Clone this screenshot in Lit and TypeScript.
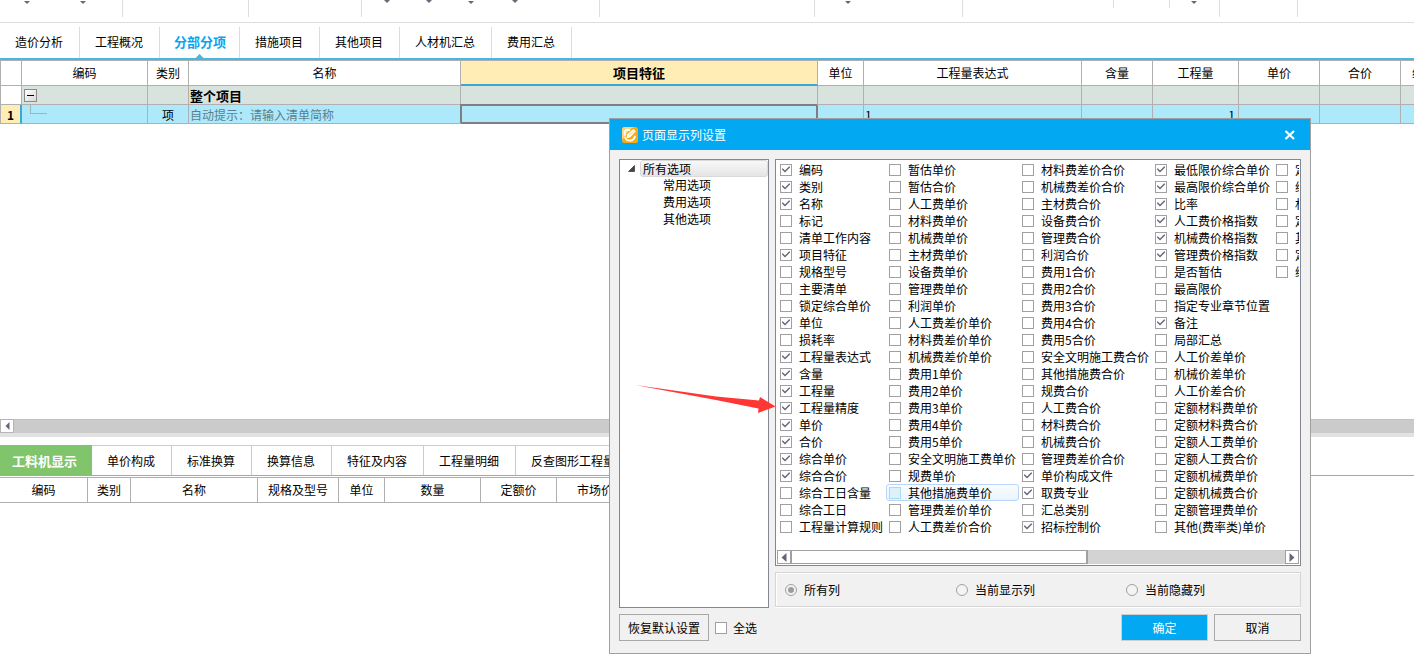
import { LitElement, html, css, svg, nothing } from "lit";
import { customElement, state } from "lit/decorators.js";
import { classMap } from "lit/directives/class-map.js";
import { styleMap } from "lit/directives/style-map.js";

const base = css`
  * { box-sizing: border-box; }
  button {
    font: inherit;
    color: inherit;
    margin: 0;
    padding: 0;
    border: 0;
    background: none;
    white-space: nowrap;
  }
  input[type="checkbox"], input[type="radio"] {
    appearance: none;
    flex: none;
    width: 12px;
    height: 12px;
    margin: 0;
    border: 1px solid #a0a0a0;
    background: #fff;
    position: relative;
  }
  input[type="radio"] { border-radius: 50%; background: #f4f4f4; }
  input[type="checkbox"]:checked::after {
    content: "";
    position: absolute;
    inset: 0;
    background: #66667a;
    clip-path: polygon(1px 4px, 2px 4px, 4px 6px, 8px 2px, 9px 2px, 9px 3px, 4px 8px, 1px 5px);
  }
  input[type="radio"]:checked::after {
    content: "";
    position: absolute;
    inset: 2px;
    border-radius: 50%;
    background: #9c9c9c;
  }
`;

type Cell = { w: number; caret?: "high" | "low"; sep?: "full" | "half" };
const ribbon: Cell[] = [
  { w: 54, caret: "low" }, { w: 58, caret: "low" }, { w: 11, sep: "full" },
  { w: 126, sep: "full" }, { w: 113, sep: "full" },
  { w: 50, caret: "high" }, { w: 34, caret: "high" }, { w: 50, caret: "low" },
  { w: 38, caret: "high" }, { w: 66, sep: "full" }, { w: 215, sep: "full" },
  { w: 66, caret: "low" }, { w: 82, sep: "full" }, { w: 151, sep: "half" },
  { w: 56, sep: "half" }, { w: 48, caret: "low" }, { w: 2, sep: "full" }, { w: 78, sep: "full" },
];

const upperTabs = ["造价分析", "工程概况", "分部分项", "措施项目", "其他项目", "人材机汇总", "费用汇总"];
const lowerTabs = ["工料机显示", "单价构成", "标准换算", "换算信息", "特征及内容", "工程量明细", "反查图形工程量"];

const upperCols: [string, number][] = [
  ["", 22], ["编码", 126], ["类别", 41], ["名称", 272], ["项目特征", 357], ["单位", 46],
  ["工程量表达式", 218], ["含量", 71], ["工程量", 86], ["单价", 81], ["合价", 81], ["综合单价", 71],
];
const lowerCols: [string, number][] = [
  ["编码", 88], ["类别", 43], ["名称", 127], ["规格及型号", 81], ["单位", 46],
  ["数量", 96], ["定额价", 76], ["市场价", 77], ["合价", 76],
];

// Entries that start with "+" are ticked.
const options: string[][] = [
  ["+编码", "+类别", "+名称", "标记", "清单工作内容", "+项目特征", "规格型号", "主要清单", "锁定综合单价", "+单位", "损耗率", "+工程量表达式", "+含量", "+工程量", "+工程量精度", "+单价", "+合价", "+综合单价", "+综合合价", "综合工日含量", "综合工日", "工程量计算规则"],
  ["暂估单价", "暂估合价", "人工费单价", "材料费单价", "机械费单价", "主材费单价", "设备费单价", "管理费单价", "利润单价", "人工费差价单价", "材料费差价单价", "机械费差价单价", "费用1单价", "费用2单价", "费用3单价", "费用4单价", "费用5单价", "安全文明施工费单价", "规费单价", "其他措施费单价", "管理费差价单价", "人工费差价合价"],
  ["材料费差价合价", "机械费差价合价", "主材费合价", "设备费合价", "管理费合价", "利润合价", "费用1合价", "费用2合价", "费用3合价", "费用4合价", "费用5合价", "安全文明施工费合价", "其他措施费合价", "规费合价", "人工费合价", "材料费合价", "机械费合价", "管理费差价合价", "+单价构成文件", "+取费专业", "汇总类别", "+招标控制价"],
  ["+最低限价综合单价", "+最高限价综合单价", "+比率", "+人工费价格指数", "+机械费价格指数", "+管理费价格指数", "是否暂估", "最高限价", "指定专业章节位置", "+备注", "局部汇总", "人工价差单价", "机械价差单价", "人工价差合价", "定额材料费单价", "定额材料费合价", "定额人工费单价", "定额人工费合价", "定额机械费单价", "定额机械费合价", "定额管理费单价", "其他(费率类)单价"],
  ["定额", "综合", "材料", "定额", "其他", "定额", "综合"],
];

@customElement("column-dialog")
export class ColumnDialog extends LitElement {
  @state() private hot = "其他措施费单价";

  static styles = [base, css`
    :host {
      display: block;
      border: 1px solid #a0a0a0;
      background: #f1f1f1;
      font-size: 12px;
      line-height: 17px;
      color: #000;
    }
    .title {
      display: flex;
      align-items: center;
      height: 31px;
      padding: 0 14px 0 12px;
      background: #02a9f2;
      color: #fff;
      gap: 4px;
    }
    .title h2 { font: inherit; margin: 0; flex: 1; }
    .title svg { display: block; }
    .body { padding: 9px 9px 12px; }
    .main { display: grid; grid-template-columns: 150px minmax(0, 1fr); gap: 6px; height: 449px; }
    .tree, .list { background: #fff; border: 1px solid #828790; }
    .tree ul { list-style: none; margin: 0; padding: 0; }
    .root { display: flex; align-items: center; padding-left: 8px; }
    .root svg { margin-right: 5px; flex: none; }
    .root button {
      flex: 1;
      height: 17px;
      line-height: 15px;
      padding-left: 2px;
      text-align: left;
      border: 1px solid #d9d9d9;
      border-radius: 3px;
      background: linear-gradient(#f8f8f8, #e5e5e5);
    }
    .leaf button { display: block; height: 17px; line-height: 15px; padding-bottom: 2px; margin-left: 43px; }
    .right { display: flex; flex-direction: column; gap: 6px; min-width: 0; }
    .list { flex: 1; padding: 1px; display: flex; flex-direction: column; min-height: 0; }
    .cols { flex: 1; display: grid; grid-template-columns: 109px 133px 133px 121px 133px; overflow: hidden; }
    .col { display: flex; flex-direction: column; }
    .opt {
      display: flex;
      align-items: center;
      gap: 7px;
      height: 17px;
      padding-left: 3px;
      white-space: nowrap;
    }
    .hot { padding-left: 2px; border: 1px solid #b8d6fb; border-radius: 3px; background: linear-gradient(#fafcff, #ebf4fe); }
    .hot input { background: #dff1f8; border-color: #a9dcee; }
    .bar { display: flex; height: 14px; background: #d3d3d3; }
    .bar button { width: 14px; border: 1px solid #a0a0a0; background: #fff; display: grid; place-items: center; }
    .thumb { width: 297px; border: 1px solid #a0a0a0; border-right-width: 2px; background: #fff; }
    .space { flex: 1; }
    .scope {
      display: grid;
      grid-template-columns: 171px 170px auto;
      align-items: center;
      height: 35px;
      margin: 0 0 1px;
      padding: 0 9px;
      border: 1px solid #d5d5d5;
      box-shadow: inset 1px 1px #fff, 0 1px #fff;
    }
    .scope label { display: flex; align-items: center; gap: 7px; }
    .foot { display: flex; align-items: center; gap: 6px; margin-top: 6px; }
    .foot label { display: flex; align-items: center; gap: 6px; flex: 1; }
    .btn { height: 27px; width: 87px; border: 1px solid #a8a8a8; }
    .wide { width: 90px; }
    .ok { background: #02a9f2; color: #fff; border-color: #cfcfcf; }
    .mark { position: absolute; left: 24px; top: 266px; pointer-events: none; }
  `];

  private row(entry: string) {
    const on = entry.startsWith("+");
    const name = on ? entry.slice(1) : entry;
    return html`<label class=${classMap({ opt: true, hot: name === this.hot })}><input type="checkbox" ?checked=${on}>${name}</label>`;
  }

  render() {
    return html`
      <div class="title">
        <svg width="16" height="16" viewBox="0 0 16 16" aria-hidden="true">
          <rect width="16" height="16" rx="2.500" fill="#fbab12"/>
          <path d="M0 3Q0 0 3 0h9L7 3 2 11 0 12z" fill="#fdd27c"/>
          <path d="M7.500 3H4.500Q1.500 4.500 3 8M3 10.500Q4.500 14 8.500 13.500 12 13 13 9.500" fill="none" stroke="#fff" stroke-width="1.800" stroke-linecap="round"/>
          <path d="M5 7.500 11.500 2l2.300 2.300-5.600 6-3.700 1z" fill="#fff"/>
          <path d="M6.500 8.800 12 3.800" stroke="#fbc04a" stroke-width=".7"/>
        </svg>
        <h2>页面显示列设置</h2>
        <button aria-label="关闭">
          <svg width="12" height="10" viewBox="0 0 12 10"><path d="M1.500 1 10 9M10 1 1.500 9" stroke="#fff" stroke-width="2.200"/></svg>
        </button>
      </div>
      <div class="body">
        <div class="main">
          <nav class="tree">
            <div class="root">
              <svg width="7" height="7" viewBox="0 0 7 7"><path d="M6.500.5v6h-6z" fill="#444" stroke="#222" stroke-width=".6"/></svg>
              <button>所有选项</button>
            </div>
            <ul>${["常用选项", "费用选项", "其他选项"].map((t) => html`<li class="leaf"><button>${t}</button></li>`)}</ul>
          </nav>
          <div class="right">
            <div class="list">
              <div class="cols">${options.map((c) => html`<div class="col">${c.map((o) => this.row(o))}</div>`)}</div>
              <div class="bar">
                <button aria-label="向左"><svg width="6" height="9"><path d="M5.500 0v9L.5 4.500z" fill="#66667a"/></svg></button>
                <div class="thumb"></div>
                <div class="space"></div>
                <button aria-label="向右"><svg width="6" height="9"><path d="M.5 0v9l5-4.500z" fill="#66667a"/></svg></button>
              </div>
            </div>
            <div class="scope" role="radiogroup">
              ${["所有列", "当前显示列", "当前隐藏列"].map((t, i) => html`<label><input type="radio" name="scope" ?checked=${i === 0}>${t}</label>`)}
            </div>
          </div>
        </div>
        <div class="foot">
          <button class="btn wide">恢复默认设置</button>
          <label><input type="checkbox">全选</label>
          <button class="btn ok">确定</button>
          <button class="btn">取消</button>
        </div>
      </div>
      <svg class="mark" width="144" height="32" viewBox="0 0 144 32" aria-hidden="true">
        <path d="M1 0 82 11.500 125 15.500 126 12 141.500 21.500 124 28 124.500 23.500 82 15z" fill="#ff3634"/>
      </svg>`;
  }
}

@customElement("app-root")
export class AppRoot extends LitElement {
  @state() private tab = "分部分项";
  @state() private detail = "工料机显示";

  static styles = [base, css`
    :host {
      display: block;
      position: relative;
      height: 100vh;
      overflow: hidden;
      background: #fff;
      color: #000;
      font: 12px/17px "Noto Sans CJK SC", "Noto Sans", sans-serif;
    }
    .page { display: flex; flex-direction: column; height: 100%; }
    .ribbon { display: flex; flex: none; height: 23px; border-bottom: 1px solid #dedede; }
    .cell { display: flex; flex: none; justify-content: center; align-items: flex-start; }
    .cell svg { display: block; }
    .low { padding-top: 1px; }
    .full { height: 17px; border-right: 1px solid #dedede; }
    .half { height: 8px; border-right: 1px solid #dedede; }
    .tabs { display: flex; flex: none; height: 37px; padding-top: 4px; border-bottom: 2px solid #47b7e2; }
    .tabs button { padding: 0 16px 2px 15px; border-right: 1px solid #dcdcdc; position: relative; }
    .tabs .on { padding: 0 13px 2px 14px; font-size: 13px; font-weight: 700; color: #08a5ee; }
    .tabs .on::after {
      content: "";
      position: absolute;
      left: calc(50% - 4px);
      bottom: 0;
      width: 8px;
      height: 4px;
      background: #47b7e2;
      clip-path: polygon(50% 0, 100% 100%, 0 100%);
    }
    .upper { flex: 359 1 0; min-height: 0; overflow: hidden; }
    .lower { flex: 225 1 0; min-height: 0; overflow: hidden; padding-top: 8px; }
    table { table-layout: fixed; width: 0; border-collapse: separate; border-spacing: 0; border-top: 1px solid #b0b0b0; }
    th { height: 25px; padding: 0 0 2px; font-weight: 400; border: solid #b0b0b0; border-width: 0 1px 1px 0; white-space: nowrap; }
    td { height: 19px; padding: 0 2px; line-height: 17px; border: solid #b0b0b0; border-width: 0 1px 1px 0; white-space: nowrap; }
    .upper th:first-child, .upper td:first-child { border-left: 1px solid #b0b0b0; }
    .upper .picked { padding-bottom: 1px; background: #ffedb5; font-size: 13px; font-weight: 700; border-bottom: 2px solid #3aa8d2; }
    .group td { background: #d9e3dd; font-size: 13px; font-weight: 700; padding: 0 1px; }
    .group td:first-child { background: #fff; }
    .line td { background: #ade9fb; padding: 0 1px; }
    .upper .line td:first-child { background: #ffedb5; font-weight: 700; text-align: center; border-right: 2px solid #3aa8d2; }
    .fold { display: block; position: relative; width: 13px; height: 13px; margin-left: 1px; border: 1px solid #8a8a8a; background: linear-gradient(135deg, #fff, #d8d8d8); }
    .fold::after { content: ""; position: absolute; left: 2px; right: 2px; top: 5px; height: 1px; background: #000; }
    .branch { display: block; width: 17px; height: 9px; margin: 0 0 9px 7px; border: solid #9bb5bd; border-width: 0 0 1px 1px; }
    .hint { color: #5b7f8c; }
    .mid { text-align: center; }
    .line .num { text-align: right; padding-right: 3px; }
    .line .cursor { border-color: #7f7f7f; box-shadow: inset 0 0 0 1px #7f7f7f, -1px -1px #7f7f7f; }
    .scroll { display: flex; flex: none; height: 18px; background: #cbcbcb; border-bottom: 4px solid #e2e2e2; box-shadow: inset 0 1px #c3c3c3; }
    .scroll button { width: 14px; border: 1px solid #b5b5b5; background: #fff; display: grid; place-items: center; }
    .subtabs { display: flex; height: 31px; border-bottom: 1px solid #80c56c; margin-bottom: 1px; }
    .subtabs button { padding: 0 16px 0 15px; border-top: 1px solid #b5e19b; border-right: 1px solid #b5e19b; }
    .subtabs .on { padding: 0 14px 0 12px; font-size: 13px; font-weight: 700; color: #fff; background: #80c56c; border-color: #80c56c; }
    column-dialog { position: absolute; left: 609px; right: 103px; top: 118px; }
  `];

  private cols(c: [string, number][]) {
    return html`<colgroup>${c.map(([, w]) => html`<col style=${styleMap({ width: w + "px" })}>`)}</colgroup>`;
  }

  render() {
    const blanks = (n: number) => Array.from({ length: n }, () => html`<td></td>`);
    return html`
      <div class="page">
        <div class="ribbon">
          ${ribbon.map((c) => html`<div
            class=${classMap({ cell: true, low: c.caret === "low", full: c.sep === "full", half: c.sep === "half" })}
            style=${styleMap({ width: c.w + "px" })}
          >${c.caret ? html`<svg width="6" height="3">${svg`<path d="M0 0h6L3 3z" fill="#666a78"/>`}</svg>` : nothing}</div>`)}
        </div>
        <div class="tabs">
          ${upperTabs.map((t) => html`<button class=${classMap({ on: t === this.tab })} @click=${() => (this.tab = t)}>${t}</button>`)}
        </div>
        <div class="upper">
          <table>
            ${this.cols(upperCols)}
            <thead><tr>${upperCols.map(([t]) => html`<th class=${classMap({ picked: t === "项目特征" })}>${t}</th>`)}</tr></thead>
            <tbody>
              <tr class="group">
                <td></td><td><button class="fold" aria-label="折叠"></button></td><td></td><td>整个项目</td>${blanks(8)}
              </tr>
              <tr class="line">
                <td>1</td><td><span class="branch"></span></td><td class="mid">项</td>
                <td class="hint">自动提示：请输入清单简称</td><td class="cursor"></td><td></td>
                <td>1</td><td></td><td class="num">1</td>${blanks(3)}
              </tr>
            </tbody>
          </table>
        </div>
        <div class="scroll">
          <button aria-label="向左"><svg width="5" height="8"><path d="M4.500 0v8L.5 4z" fill="#66667a"/></svg></button>
        </div>
        <div class="lower">
          <div class="subtabs">
            ${lowerTabs.map((t) => html`<button class=${classMap({ on: t === this.detail })} @click=${() => (this.detail = t)}>${t}</button>`)}
          </div>
          <table>
            ${this.cols(lowerCols)}
            <thead><tr>${lowerCols.map(([t]) => html`<th>${t}</th>`)}</tr></thead>
          </table>
        </div>
      </div>
      <column-dialog role="dialog" aria-label="页面显示列设置"></column-dialog>`;
  }
}
